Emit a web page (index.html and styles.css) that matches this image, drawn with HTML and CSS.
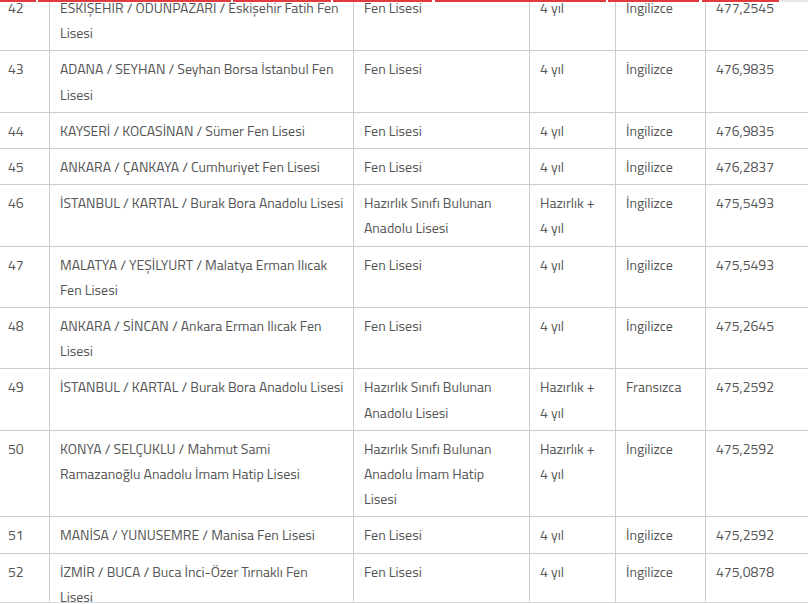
FILE: index.html
```html
<!DOCTYPE html>
<html lang="tr">
<head>
<meta charset="utf-8">
<title>Liseler</title>
<link rel="stylesheet" href="styles.css">
</head>
<body>
<div class="top-strip">
  <span class="seg s1"></span>
  <span class="seg s2"></span>
  <span class="seg s3"></span>
  <span class="seg s4"></span>
  <span class="seg s5"></span>
  <span class="seg s6"></span>
  <span class="seg s7"></span>
  <span class="seg rest"></span>
</div>
<table class="results">
  <colgroup>
    <col class="c-no">
    <col class="c-school">
    <col class="c-type">
    <col class="c-dur">
    <col class="c-lang">
    <col class="c-score">
  </colgroup>
  <tbody>
    <tr><td>42</td><td>ESKİŞEHİR / ODUNPAZARI / Eskişehir Fatih Fen<br>Lisesi</td><td>Fen Lisesi</td><td>4 yıl</td><td>İngilizce</td><td>477,2545</td></tr>
    <tr><td>43</td><td>ADANA / SEYHAN / Seyhan Borsa İstanbul Fen<br>Lisesi</td><td>Fen Lisesi</td><td>4 yıl</td><td>İngilizce</td><td>476,9835</td></tr>
    <tr><td>44</td><td>KAYSERİ / KOCASİNAN / Sümer Fen Lisesi</td><td>Fen Lisesi</td><td>4 yıl</td><td>İngilizce</td><td>476,9835</td></tr>
    <tr><td>45</td><td>ANKARA / ÇANKAYA / Cumhuriyet Fen Lisesi</td><td>Fen Lisesi</td><td>4 yıl</td><td>İngilizce</td><td>476,2837</td></tr>
    <tr><td>46</td><td>İSTANBUL / KARTAL / Burak Bora Anadolu Lisesi</td><td>Hazırlık Sınıfı Bulunan<br>Anadolu Lisesi</td><td>Hazırlık +<br>4 yıl</td><td>İngilizce</td><td>475,5493</td></tr>
    <tr><td>47</td><td>MALATYA / YEŞİLYURT / Malatya Erman Ilıcak<br>Fen Lisesi</td><td>Fen Lisesi</td><td>4 yıl</td><td>İngilizce</td><td>475,5493</td></tr>
    <tr><td>48</td><td>ANKARA / SİNCAN / Ankara Erman Ilıcak Fen<br>Lisesi</td><td>Fen Lisesi</td><td>4 yıl</td><td>İngilizce</td><td>475,2645</td></tr>
    <tr><td>49</td><td>İSTANBUL / KARTAL / Burak Bora Anadolu Lisesi</td><td>Hazırlık Sınıfı Bulunan<br>Anadolu Lisesi</td><td>Hazırlık +<br>4 yıl</td><td>Fransızca</td><td>475,2592</td></tr>
    <tr><td>50</td><td>KONYA / SELÇUKLU / Mahmut Sami<br>Ramazanoğlu Anadolu İmam Hatip Lisesi</td><td>Hazırlık Sınıfı Bulunan<br>Anadolu İmam Hatip<br>Lisesi</td><td>Hazırlık +<br>4 yıl</td><td>İngilizce</td><td>475,2592</td></tr>
    <tr><td>51</td><td>MANİSA / YUNUSEMRE / Manisa Fen Lisesi</td><td>Fen Lisesi</td><td>4 yıl</td><td>İngilizce</td><td>475,2592</td></tr>
    <tr><td>52</td><td>İZMİR / BUCA / Buca İnci-Özer Tırnaklı Fen<br>Lisesi</td><td>Fen Lisesi</td><td>4 yıl</td><td>İngilizce</td><td>475,0878</td></tr>
  </tbody>
</table>
<div class="bottom-strip"></div>
</body>
</html>
```

FILE: styles.css
```css
html, body {
  margin: 0;
  padding: 0;
  background: #ffffff;
  overflow: hidden;
}

body {
  width: 808px;
  height: 604px;
  font-family: "Titillium Web", Roboto, "Liberation Sans", sans-serif;
  font-size: 14px;
  color: #555555;
}

.top-strip {
  position: fixed;
  top: 0;
  left: 0;
  width: 808px;
  height: 2px;
  display: flex;
  background: #ffffff;
  z-index: 5;
}

.seg {
  display: block;
  height: 2px;
  background: #e03c3f;
  flex: none;
}

.s1 { width: 36px; margin-right: 2px; }
.s2 { width: 193px; margin-right: 2px; }
.s3 { width: 98px; margin-right: 2px; }
.s4 { width: 99px; margin-right: 3px; }
.s5 { width: 171px; margin-right: 2px; }
.s6 { width: 91px; margin-right: 3px; }
.s7 { width: 77px; margin-right: 1px; }
.rest { flex: 1; background: #e6e6e6; }

.bottom-strip {
  position: fixed;
  left: 0;
  bottom: 0;
  width: 808px;
  height: 1px;
  border-top: 1px solid #d3dde1;
  background: #ffffff;
  z-index: 5;
}

.results {
  border-collapse: collapse;
  table-layout: fixed;
  width: 828px;
  margin: -11px 0 0 -3px;
}

.c-no { width: 52px; }
.c-school { width: 304px; }
.c-type { width: 176px; }
.c-dur { width: 86px; }
.c-lang { width: 90px; }
.c-score { width: 120px; }

.results td {
  border: 1px solid #cccccc;
  padding: 5px 10px 5px 10px;
  line-height: 25.2px;
  vertical-align: top;
  white-space: nowrap;
  overflow: hidden;
  text-align: left;
}
```
